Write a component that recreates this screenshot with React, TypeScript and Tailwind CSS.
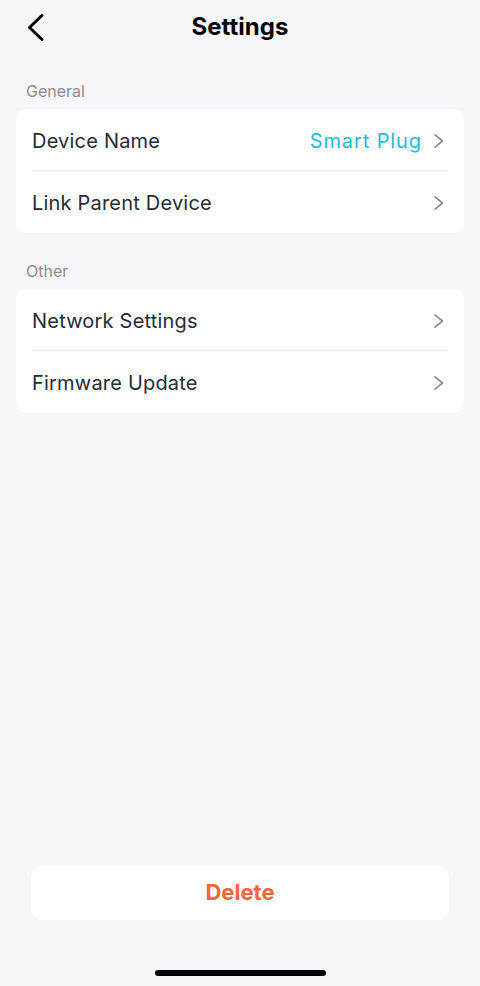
const sections = [
  {
    title: 'General',
    rows: [
      { label: 'Device Name', value: 'Smart Plug' },
      { label: 'Link Parent Device' },
    ],
  },
  {
    title: 'Other',
    rows: [{ label: 'Network Settings' }, { label: 'Firmware Update' }],
  },
];

function Chevron() {
  return (
    <svg width="12" height="16" viewBox="0 0 12 16" fill="none" className="shrink-0 mr-[3px]">
      <path d="M2 1.8 L9.5 8 L2 14.2" stroke="#8d8d92" strokeWidth="1.7" strokeLinecap="round" strokeLinejoin="round" />
    </svg>
  );
}

function Row({ label, value, last }: { label: string; value?: string; last?: boolean }) {
  return (
    <div className="px-4">
      <div className={`flex items-center h-[62px] pt-[2px] ${last ? '' : 'border-b border-[#ececf0]'}`}>
        <span className="flex-1 text-[20px] text-[#262b36] tracking-[0.2px]">{label}</span>
        {value && <span className="text-[20px] text-[#2ab7da] mr-[11px] tracking-[0.9px]">{value}</span>}
        <Chevron />
      </div>
    </div>
  );
}

export default function App() {
  return (
    <div
      className="flex flex-col h-[986px] w-[480px] bg-[#f7f7fb]"
      style={{ fontFamily: 'Inter, "Noto Sans", sans-serif' }}
    >
      <header className="relative flex items-center justify-center h-[54px]">
        <svg width="20" height="30" viewBox="0 0 20 30" fill="none" className="absolute left-[26px] top-[12px]">
          <path d="M16 3.5 L3.5 15.5 L16 27.5" stroke="#000" strokeWidth="3" strokeLinecap="round" strokeLinejoin="round" />
        </svg>
        <h1 className="text-[24px] font-bold text-black">Settings</h1>
      </header>

      <div className="px-4">
        {sections.map((s, i) => (
          <div key={s.title} className={i === 0 ? 'mt-[27px]' : 'mt-[28px]'}>
            <div className="px-[10px] text-[16px] leading-[20px] text-[#8c8c90]">{s.title}</div>
            <div className="mt-[8px] bg-white rounded-[10px]">
              {s.rows.map((r, j) => (
                <Row key={r.label} label={r.label} value={r.value} last={j === s.rows.length - 1} />
              ))}
            </div>
          </div>
        ))}
      </div>

      <div className="flex-1" />

      <div className="px-[31px]">
        <button className="w-full h-[55px] bg-white rounded-[12px] text-[22px] font-bold text-[#f5643a]">
          Delete
        </button>
      </div>

      <div className="flex justify-center mt-[50px] mb-[10px]">
        <div className="w-[171px] h-[6px] rounded-full bg-black" />
      </div>
    </div>
  );
}
